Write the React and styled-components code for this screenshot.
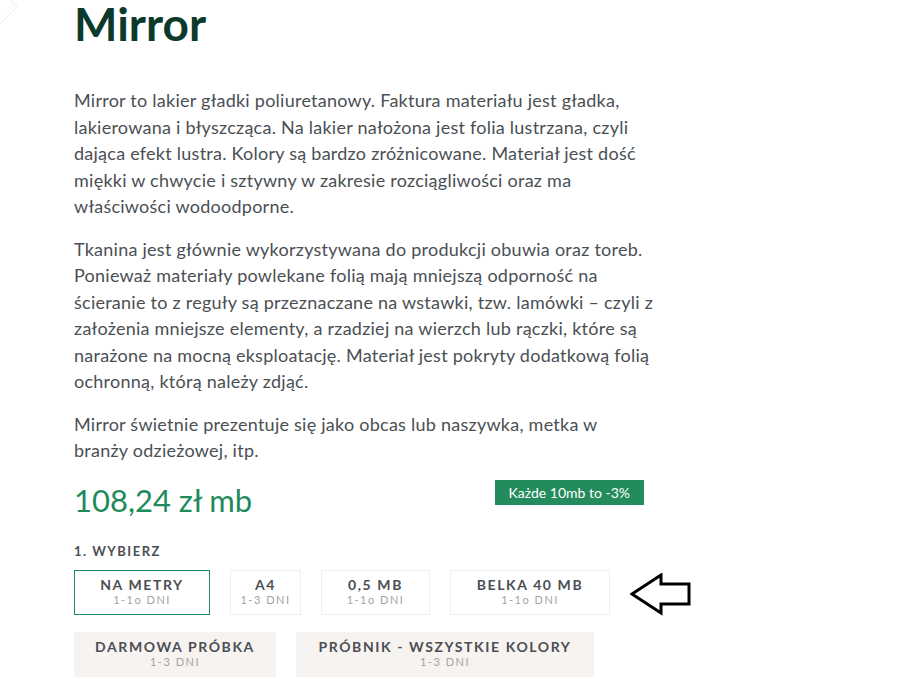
import styled, { createGlobalStyle } from 'styled-components';

const GlobalStyle = createGlobalStyle`
  html, body {
    margin: 0;
    padding: 0;
    background: #ffffff;
  }
  body {
    font-family: Lato, "Liberation Sans", sans-serif;
    color: #4b4f54;
  }
`;

const Page = styled.div`
  position: relative;
  height: 679px;
  overflow: hidden;
`;

const Corner = styled.svg`
  position: absolute;
  left: 0;
  top: 0;
`;

const Content = styled.main`
  width: 580px;
  padding: 1px 0 0 74px;
`;

const Title = styled.h1`
  margin: 0 0 40px;
  font-size: 46px;
  line-height: 46px;
  font-weight: 700;
  color: #0b3a2c;
`;

const Paragraph = styled.p`
  margin: 0 0 16px;
  font-size: 18px;
  line-height: 26.5px;
  letter-spacing: 0.25px;
  color: #4b4f54;
`;

const PriceRow = styled.div`
  display: flex;
  justify-content: space-between;
  align-items: flex-start;
  width: 570px;
  margin-top: 8px;
`;

const Price = styled.div`
  font-size: 31px;
  line-height: 40px;
  font-weight: 400;
  color: #218a5a;
`;

const Badge = styled.div`
  height: 25px;
  padding: 0 14px;
  display: flex;
  align-items: center;
  background: #248b5c;
  color: #ffffff;
  font-size: 14px;
`;

const StepLabel = styled.div`
  margin-top: 21px;
  font-size: 13px;
  line-height: 20px;
  font-weight: 700;
  letter-spacing: 1.5px;
  color: #4b4f54;
`;

const OptionRow = styled.div`
  display: flex;
  align-items: center;
  gap: 20px;
  margin-top: ${(p) => p.$top}px;
`;

const Option = styled.button`
  box-sizing: border-box;
  flex-shrink: 0;
  width: ${(p) => p.$width}px;
  height: 45px;
  padding: 6px 0 8px;
  display: flex;
  flex-direction: column;
  align-items: center;
  border: 1px solid ${(p) => (p.$selected ? '#218a5a' : p.$sample ? '#f7f3f0' : '#efefef')};
  background: ${(p) => (p.$sample ? '#f7f3f0' : '#ffffff')};
  font-family: inherit;
  cursor: pointer;
`;

const OptionName = styled.span`
  font-size: 14px;
  line-height: 16px;
  font-weight: 700;
  letter-spacing: 1.6px;
  color: #4b4f54;
  white-space: nowrap;
`;

const OptionTime = styled.span`
  font-size: 11px;
  line-height: 14px;
  letter-spacing: 1.5px;
  color: #a3a3a3;
  white-space: nowrap;
`;

const Arrow = styled.svg`
  flex-shrink: 0;
  margin-left: 0;
  margin-top: 5px;
`;

const formats = [
  { name: 'NA METRY', time: '1-1o DNI', width: 136, selected: true },
  { name: 'A4', time: '1-3 DNI', width: 71 },
  { name: '0,5 MB', time: '1-1o DNI', width: 109 },
  { name: 'BELKA 40 MB', time: '1-1o DNI', width: 160 },
];

const samples = [
  { name: 'DARMOWA PRÓBKA', time: '1-3 DNI', width: 202 },
  { name: 'PRÓBNIK - WSZYSTKIE KOLORY', time: '1-3 DNI', width: 298 },
];

const App = () => {
  return (
    <Page>
      <GlobalStyle />
      <Corner width="40" height="30" viewBox="0 0 40 30">
        <polyline points="0,24 17,7 12,0" fill="none" stroke="#e6e6e6" strokeWidth="1" strokeDasharray="1 1" />
        <polyline points="0,20 14,6 10,0" fill="none" stroke="#eeeeee" strokeWidth="1" strokeDasharray="1 1" />
      </Corner>
      <Content>
        <Title>Mirror</Title>
        <Paragraph>
          Mirror to lakier gładki poliuretanowy. Faktura materiału jest gładka, lakierowana i błyszcząca. Na lakier
          nałożona jest folia lustrzana, czyli dająca efekt lustra. Kolory są bardzo zróżnicowane. Materiał jest dość
          miękki w chwycie i sztywny w zakresie rozciągliwości oraz ma właściwości wodoodporne.
        </Paragraph>
        <Paragraph>
          Tkanina jest głównie wykorzystywana do produkcji obuwia oraz toreb. Ponieważ materiały powlekane folią mają
          mniejszą odporność na ścieranie to z reguły są przeznaczane na wstawki, tzw. lamówki – czyli z założenia
          mniejsze elementy, a rzadziej na wierzch lub rączki, które są narażone na mocną eksploatację. Materiał jest
          pokryty dodatkową folią ochronną, którą należy zdjąć.
        </Paragraph>
        <Paragraph>
          Mirror świetnie prezentuje się jako obcas lub naszywka, metka w branży odzieżowej, itp.
        </Paragraph>
        <PriceRow>
          <Price>108,24 zł mb</Price>
          <Badge>Każde 10mb to -3%</Badge>
        </PriceRow>
        <StepLabel>1. WYBIERZ</StepLabel>
        <OptionRow $top={7}>
          {formats.map((f) => (
            <Option key={f.name} $width={f.width} $selected={f.selected}>
              <OptionName>{f.name}</OptionName>
              <OptionTime>{f.time}</OptionTime>
            </Option>
          ))}
          <Arrow width="62" height="44" viewBox="0 0 62 44">
            <path
              d="M2 21 L31 2 L31 11 L59 11 L59 31 L31 31 L31 40 Z"
              fill="none"
              stroke="#000000"
              strokeWidth="3"
              strokeLinejoin="miter"
            />
          </Arrow>
        </OptionRow>
        <OptionRow $top={15}>
          {samples.map((s) => (
            <Option key={s.name} $width={s.width} $sample>
              <OptionName>{s.name}</OptionName>
              <OptionTime>{s.time}</OptionTime>
            </Option>
          ))}
        </OptionRow>
      </Content>
    </Page>
  );
};

export default App;
